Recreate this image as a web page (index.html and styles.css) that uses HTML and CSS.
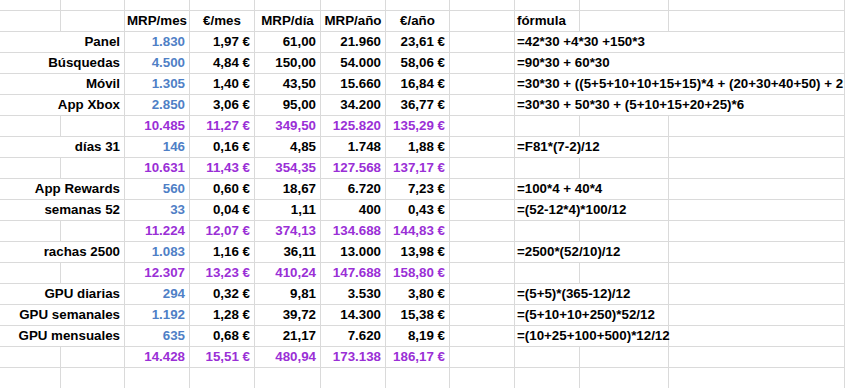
FILE: index.html
```html
<!DOCTYPE html>
<html lang="es">
<head>
<meta charset="utf-8">
<title>MRP</title>
<link rel="stylesheet" href="styles.css">
</head>
<body>
<div class="sheet">
  <!-- top partial row -->
  <div class="c top"></div><div class="c top"></div><div class="c top"></div><div class="c top"></div><div class="c top"></div><div class="c top"></div><div class="c top"></div><div class="c top"></div><div class="c top"></div><div class="c top"></div><div class="c top"></div>

  <!-- header -->
  <div class="c"></div><div class="c"></div><div class="c hd">MRP/mes</div><div class="c hd">€/mes</div><div class="c hd">MRP/día</div><div class="c hd">MRP/año</div><div class="c hd">€/año</div><div class="c"></div><div class="c fm">fórmula</div><div class="c"></div><div class="c"></div>

  <div class="c lbl">Panel</div><div class="c n blue">1.830</div><div class="c n">1,97 €</div><div class="c n">61,00</div><div class="c n">21.960</div><div class="c n">23,61 €</div><div class="c"></div><div class="c fm wide">=42*30 +4*30 +150*3</div>

  <div class="c lbl">Búsquedas</div><div class="c n blue">4.500</div><div class="c n">4,84 €</div><div class="c n">150,00</div><div class="c n">54.000</div><div class="c n">58,06 €</div><div class="c"></div><div class="c fm wide">=90*30 + 60*30</div>

  <div class="c lbl">Móvil</div><div class="c n blue">1.305</div><div class="c n">1,40 €</div><div class="c n">43,50</div><div class="c n">15.660</div><div class="c n">16,84 €</div><div class="c"></div><div class="c fm wide">=30*30 + ((5+5+10+10+15+15)*4 + (20+30+40+50) + 2</div>

  <div class="c lbl">App Xbox</div><div class="c n blue">2.850</div><div class="c n">3,06 €</div><div class="c n">95,00</div><div class="c n">34.200</div><div class="c n">36,77 €</div><div class="c"></div><div class="c fm wide">=30*30 + 50*30 + (5+10+15+20+25)*6</div>

  <div class="c"></div><div class="c"></div><div class="c n purple">10.485</div><div class="c n purple">11,27 €</div><div class="c n purple">349,50</div><div class="c n purple">125.820</div><div class="c n purple">135,29 €</div><div class="c"></div><div class="c"></div><div class="c"></div><div class="c"></div>

  <div class="c lbl">días 31</div><div class="c n blue">146</div><div class="c n">0,16 €</div><div class="c n">4,85</div><div class="c n">1.748</div><div class="c n">1,88 €</div><div class="c"></div><div class="c fm mid">=F81*(7-2)/12</div><div class="c"></div>

  <div class="c"></div><div class="c"></div><div class="c n purple">10.631</div><div class="c n purple">11,43 €</div><div class="c n purple">354,35</div><div class="c n purple">127.568</div><div class="c n purple">137,17 €</div><div class="c"></div><div class="c"></div><div class="c"></div><div class="c"></div>

  <div class="c lbl">App Rewards</div><div class="c n blue">560</div><div class="c n">0,60 €</div><div class="c n">18,67</div><div class="c n">6.720</div><div class="c n">7,23 €</div><div class="c"></div><div class="c fm mid">=100*4 + 40*4</div><div class="c"></div>

  <div class="c lbl">semanas 52</div><div class="c n blue">33</div><div class="c n">0,04 €</div><div class="c n">1,11</div><div class="c n">400</div><div class="c n">0,43 €</div><div class="c"></div><div class="c fm mid">=(52-12*4)*100/12</div><div class="c"></div>

  <div class="c"></div><div class="c"></div><div class="c n purple">11.224</div><div class="c n purple">12,07 €</div><div class="c n purple">374,13</div><div class="c n purple">134.688</div><div class="c n purple">144,83 €</div><div class="c"></div><div class="c"></div><div class="c"></div><div class="c"></div>

  <div class="c lbl">rachas 2500</div><div class="c n blue">1.083</div><div class="c n">1,16 €</div><div class="c n">36,11</div><div class="c n">13.000</div><div class="c n">13,98 €</div><div class="c"></div><div class="c fm mid">=2500*(52/10)/12</div><div class="c"></div>

  <div class="c"></div><div class="c"></div><div class="c n purple">12.307</div><div class="c n purple">13,23 €</div><div class="c n purple">410,24</div><div class="c n purple">147.688</div><div class="c n purple">158,80 €</div><div class="c"></div><div class="c"></div><div class="c"></div><div class="c"></div>

  <div class="c lbl">GPU diarias</div><div class="c n blue">294</div><div class="c n">0,32 €</div><div class="c n">9,81</div><div class="c n">3.530</div><div class="c n">3,80 €</div><div class="c"></div><div class="c fm mid">=(5+5)*(365-12)/12</div><div class="c"></div>

  <div class="c lbl">GPU semanales</div><div class="c n blue">1.192</div><div class="c n">1,28 €</div><div class="c n">39,72</div><div class="c n">14.300</div><div class="c n">15,38 €</div><div class="c"></div><div class="c fm mid">=(5+10+10+250)*52/12</div><div class="c"></div>

  <div class="c lbl">GPU mensuales</div><div class="c n blue">635</div><div class="c n">0,68 €</div><div class="c n">21,17</div><div class="c n">7.620</div><div class="c n">8,19 €</div><div class="c"></div><div class="c fm mid">=(10+25+100+500)*12/12</div><div class="c"></div>

  <div class="c"></div><div class="c"></div><div class="c n purple">14.428</div><div class="c n purple">15,51 €</div><div class="c n purple">480,94</div><div class="c n purple">173.138</div><div class="c n purple">186,17 €</div><div class="c"></div><div class="c"></div><div class="c"></div><div class="c"></div>

  <div class="c"></div><div class="c"></div><div class="c"></div><div class="c"></div><div class="c"></div><div class="c"></div><div class="c"></div><div class="c"></div><div class="c"></div><div class="c"></div><div class="c"></div>
</div>
</body>
</html>
```

FILE: styles.css
```css
html, body {
  margin: 0;
  padding: 0;
  background: #ffffff;
  overflow: hidden;
}

.sheet {
  display: grid;
  grid-template-columns: 61px 64px 65px 65px 66px 65px 64px 65px 65px 89px 1fr;
  grid-template-rows: 11px;
  grid-auto-rows: 21px;
  width: 845px;
  font-family: "Liberation Sans", Arial, sans-serif;
  font-size: 13.33px;
  font-weight: bold;
  color: #000000;
}

.c {
  box-sizing: border-box;
  border-right: 1px solid #dadada;
  border-bottom: 1px solid #dadada;
  line-height: 20px;
  white-space: nowrap;
  padding: 0 4px;
  min-width: 0;
}

.hd {
  text-align: center;
  padding: 0;
}

.n {
  text-align: right;
}

.lbl {
  grid-column: span 2;
  text-align: right;
}

.fm {
  text-align: left;
  padding-left: 2px;
  overflow: visible;
}

.fm.wide {
  grid-column: span 3;
  overflow: hidden;
}

.fm.mid {
  grid-column: span 2;
}

.blue {
  color: #4f7fc6;
}

.purple {
  color: #9a2fd6;
}
```
